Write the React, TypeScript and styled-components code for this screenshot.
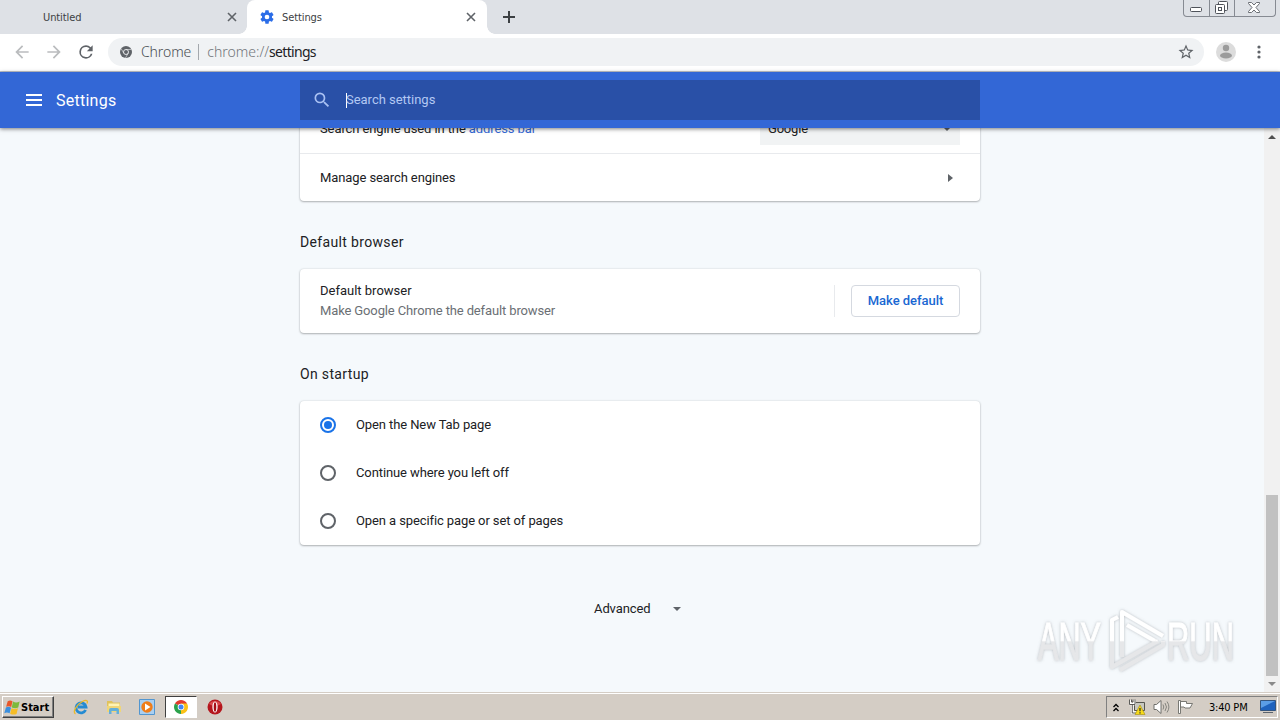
import type { ReactNode } from 'react';
import styled, { createGlobalStyle } from 'styled-components';

const GlobalStyle = createGlobalStyle`
  * {
    box-sizing: border-box;
  }

  body {
    margin: 0;
    overflow: hidden;
    font-family: Roboto, 'Liberation Sans', sans-serif;
  }

  svg {
    display: block;
    flex-shrink: 0;
  }
`;

const Screen = styled.div`
  position: relative;
  display: flex;
  flex-direction: column;
  width: 1280px;
  height: 720px;
  overflow: hidden;
  background: #f5f9fc;
`;

/* Tab strip */

const TabStrip = styled.div`
  display: flex;
  height: 34px;
  background: #dee1e6;
`;

const Tab = styled.div<{ $active?: boolean }>`
  position: relative;
  display: flex;
  align-items: center;
  width: ${(p) => (p.$active ? 240 : 247)}px;
  height: 34px;
  padding: 0 ${(p) => (p.$active ? '11px 0 12px' : '10px 0 43px')};
  border-radius: 8px 8px 0 0;
  background: ${(p) => (p.$active ? '#ffffff' : 'transparent')};

  ${(p) =>
    p.$active &&
    `
    &::before,
    &::after {
      content: '';
      position: absolute;
      bottom: 0;
      width: 8px;
      height: 8px;
    }

    &::before {
      left: -8px;
      background: radial-gradient(circle at 0 0, transparent 7.5px, #ffffff 8px);
    }

    &::after {
      right: -8px;
      background: radial-gradient(circle at 100% 0, transparent 7.5px, #ffffff 8px);
    }
  `}
`;

const TabTitle = styled.span`
  flex: 1;
  padding-top: 1px;
  font-family: 'DejaVu Sans Condensed', 'DejaVu Sans', sans-serif;
  font-stretch: condensed;
  font-size: 11px;
  line-height: 14px;
  letter-spacing: -0.1px;
  color: #3c4043;
`;

const TabIcon = styled.span`
  width: 16px;
  margin-right: 7px;
`;

const NewTab = styled.div`
  display: flex;
  align-items: center;
  padding-left: 16px;
`;

const WindowButtons = styled.div`
  display: flex;
  width: 93px;
  height: 17px;
  margin: 0 4px 0 auto;
  border: 1px solid #868a92;
  border-top: 0;
  border-radius: 0 0 4px 4px;
`;

const WindowButton = styled.div<{ $width: number }>`
  display: flex;
  align-items: center;
  justify-content: center;
  width: ${(p) => p.$width}px;
  padding: 0 2px 1px 0;

  & + & {
    border-left: 1px solid #868a92;
  }
`;

/* Toolbar */

const Toolbar = styled.div`
  display: flex;
  align-items: center;
  height: 38px;
  padding: 0 19px 1px 12px;
  border-bottom: 1px solid #c5c8ce;
  background: #ffffff;
`;

const NavIcons = styled.div`
  display: flex;
  gap: 12px;
  margin-right: 12px;
`;

const Omnibox = styled.div`
  display: flex;
  align-items: center;
  width: 1096px;
  height: 28px;
  padding: 0 9px 0 12px;
  border-radius: 14px;
  background: #f0f2f4;
`;

const UrlText = styled.div`
  display: flex;
  align-items: center;
  flex: 1;
  margin-left: 9px;
  font-family: 'Noto Sans', 'Open Sans', sans-serif;
  font-size: 14px;
  line-height: 20px;
`;

const UrlPart = styled.span<{ $color: string; $spacing?: number; $light?: boolean }>`
  font-weight: ${(p) => (p.$light ? 300 : 400)};
  letter-spacing: ${(p) => p.$spacing ?? 0}px;
  color: ${(p) => p.$color};
`;

const UrlDivider = styled.span`
  width: 1px;
  height: 16px;
  margin: 0 8px 0 7px;
  background: #a4a8ad;
`;

const Avatar = styled.div`
  margin: 0 auto 0 12px;
`;

/* Settings header */

const Header = styled.header`
  position: relative;
  z-index: 1;
  display: flex;
  align-items: center;
  flex-shrink: 0;
  height: 56px;
  padding-left: 26px;
  background: #3367d6;
  box-shadow: 0 1px 4px rgba(0, 0, 0, 0.5);
`;

const HeaderTitle = styled.h1`
  width: 244px;
  margin: 0 0 0 14px;
  font-size: 16px;
  font-weight: 400;
  letter-spacing: 0.25px;
  color: #ffffff;
`;

const SearchBox = styled.div`
  display: flex;
  align-items: center;
  width: 680px;
  height: 40px;
  padding-left: 12px;
  background: #2950a7;
`;

const Caret = styled.span`
  width: 1px;
  height: 15px;
  margin: 1px -1px 0 14px;
  background: #ffffff;
`;

const Placeholder = styled.span`
  padding-bottom: 1px;
  font-size: 13px;
  letter-spacing: -0.02px;
  color: #b3c8f3;
`;

/* Page body */

const Body = styled.div`
  display: flex;
  height: 564px;
  overflow: hidden;
`;

const Content = styled.main`
  width: 680px;
  margin: -23px 284px 0 300px;
`;

const Card = styled.section`
  border-radius: 4px;
  background: #ffffff;
  box-shadow:
    0 1px 2px rgba(60, 64, 67, 0.35),
    0 0 2px rgba(60, 64, 67, 0.2);
`;

const Row = styled.div<{ $height?: number; $divided?: boolean }>`
  display: flex;
  align-items: center;
  height: ${(p) => p.$height ?? 48}px;
  padding: 0 20px;
  border-top: ${(p) => (p.$divided ? '1px solid #e8eaed' : '0')};
`;

const Label = styled.span<{ $spacing?: number; $muted?: boolean }>`
  display: block;
  font-size: 13px;
  line-height: 20px;
  letter-spacing: ${(p) => p.$spacing ?? -0.1}px;
  white-space: nowrap;
  color: ${(p) => (p.$muted ? '#6b6f74' : '#202124')};
`;

const Link = styled.a`
  color: #3367d6;
`;

const Select = styled.div`
  display: flex;
  align-items: center;
  justify-content: space-between;
  width: 200px;
  height: 32px;
  margin-left: auto;
  padding: 0 9px 0 8px;
  background: #f1f3f4;
`;

const Arrow = styled.span<{ $direction: 'right' | 'down' | 'up'; $color?: string }>`
  width: 0;
  height: 0;
  border: 4px solid transparent;
  ${(p) => {
    const color = p.$color ?? '#5f6368';
    if (p.$direction === 'right') return `border-left: 5px solid ${color}; border-right: 0;`;
    if (p.$direction === 'down') return `border-top: 4px solid ${color}; border-bottom: 0;`;
    return `border-bottom: 4px solid ${color}; border-top: 0;`;
  }}
`;

const RowEnd = styled.div`
  display: flex;
  align-items: center;
  margin-left: auto;
  padding-right: 7px;
`;

const SectionTitle = styled.h2`
  height: 68px;
  margin: 0;
  padding-top: 31px;
  font-size: 14px;
  font-weight: 400;
  line-height: 20px;
  letter-spacing: 0.34px;
  color: #202124;
`;

const ButtonArea = styled.div`
  margin-left: auto;
  padding-left: 16px;
  border-left: 1px solid #e8eaed;
`;

const OutlineButton = styled.button`
  display: block;
  width: 109px;
  height: 32px;
  padding: 0 0 2px;
  border: 1px solid #d5d9e0;
  border-radius: 4px;
  background: #ffffff;
  font-family: inherit;
  font-size: 13px;
  font-weight: 500;
  letter-spacing: -0.05px;
  color: #1967d2;
`;

const Radio = styled.span<{ $checked?: boolean }>`
  display: flex;
  align-items: center;
  justify-content: center;
  width: 16px;
  height: 16px;
  margin-right: 20px;
  border: 2px solid ${(p) => (p.$checked ? '#1a73e8' : '#5f6368')};
  border-radius: 50%;

  &::after {
    content: '';
    width: 8px;
    height: 8px;
    border-radius: 50%;
    background: ${(p) => (p.$checked ? '#1a73e8' : 'transparent')};
  }
`;

const Advanced = styled.div`
  display: flex;
  align-items: center;
  gap: 22px;
  margin: 54px 0 0 294px;
`;

const Scrollbar = styled.div`
  display: flex;
  flex-direction: column;
  align-items: center;
  width: 16px;
  padding: 7px 0 6px;
  background: #f1f1f1;
`;

const Thumb = styled.div`
  width: 12px;
  height: 181px;
  margin: auto 0 6px;
  background: #c1c1c1;
`;

const Watermark = styled.div`
  position: absolute;
  left: 1030px;
  top: 602px;
`;

/* Taskbar */

const Taskbar = styled.footer`
  display: flex;
  align-items: center;
  height: 28px;
  padding: 1px 2px 0;
  border-top: 1px solid #d4cdc5;
  box-shadow: inset 0 1px #ffffff;
  background: #d4cdc5;
`;

const StartButton = styled.div`
  display: flex;
  align-items: center;
  width: 52px;
  height: 22px;
  padding-left: 1px;
  border: 1px solid;
  border-color: #ffffff #404040 #404040 #ffffff;
  box-shadow: inset -1px -1px #808080;
  font-family: 'DejaVu Sans Condensed', 'DejaVu Sans', sans-serif;
  font-stretch: condensed;
  font-size: 11px;
  font-weight: 700;
  color: #000000;
`;

const QuickLaunch = styled.div`
  display: flex;
  align-items: center;
  margin-left: 10px;
`;

const TaskItem = styled.div<{ $pressed?: boolean }>`
  display: flex;
  align-items: center;
  justify-content: center;
  width: ${(p) => (p.$pressed ? 32 : 33)}px;
  height: 22px;
  margin: ${(p) => (p.$pressed ? '0 1px 0 2px' : '0')};
  border: 1px solid;
  border-color: ${(p) => (p.$pressed ? '#404040 #ffffff #ffffff #404040' : 'transparent')};
  background: ${(p) => (p.$pressed ? '#ffffff' : 'transparent')};
`;

const Tray = styled.div`
  display: flex;
  align-items: center;
  width: 172px;
  height: 22px;
  margin-left: auto;
  padding-left: 6px;
  border: 1px solid;
  border-color: #808080 #ffffff #ffffff #808080;
`;

const TrayIcon = styled.span<{ $gap: number }>`
  margin-right: ${(p) => p.$gap}px;
`;

const Clock = styled.span`
  width: 51px;
  font-family: 'DejaVu Sans Condensed', 'DejaVu Sans', sans-serif;
  font-stretch: condensed;
  font-size: 11px;
  letter-spacing: -0.2px;
  white-space: nowrap;
  color: #000000;
`;

interface IconProps {
  size?: number;
  color?: string;
  path: string;
}

const Icon = ({ size = 16, color = '#5f6368', path }: IconProps) => (
  <svg width={size} height={size} viewBox="0 0 24 24" fill={color}>
    <path d={path} />
  </svg>
);

const paths = {
  back: 'M20 11H7.83l5.59-5.59L12 4l-8 8 8 8 1.41-1.41L7.83 13H20v-2z',
  forward: 'M12 4l-1.41 1.41L16.17 11H4v2h12.17l-5.58 5.59L12 20l8-8z',
  reload:
    'M17.65 6.35A7.96 7.96 0 0 0 12 4a8 8 0 1 0 7.73 10h-2.08A6 6 0 1 1 12 6c1.66 0 3.14.69 4.22 1.78L13 11h7V4l-2.35 2.35z',
  search:
    'M15.5 14h-.79l-.28-.27A6.47 6.47 0 0 0 16 9.5 6.5 6.5 0 1 0 9.5 16c1.61 0 3.09-.59 4.23-1.57l.27.28v.79l5 4.99L20.49 19l-4.99-5zm-6 0C7.01 14 5 11.99 5 9.5S7.01 5 9.5 5 14 7.01 14 9.5 11.99 14 9.5 14z',
  gear: 'M19.43 12.98c.04-.32.07-.64.07-.98s-.03-.66-.07-.98l2.11-1.65c.19-.15.24-.42.12-.64l-2-3.46c-.12-.22-.39-.3-.61-.22l-2.49 1c-.52-.4-1.08-.73-1.69-.98l-.38-2.65A.49.49 0 0 0 14 2h-4c-.25 0-.46.18-.49.42l-.38 2.65c-.61.25-1.17.59-1.69.98l-2.49-1c-.23-.09-.49 0-.61.22l-2 3.46c-.13.22-.07.49.12.64l2.11 1.65c-.04.32-.07.65-.07.98s.03.66.07.98l-2.11 1.65c-.19.15-.24.42-.12.64l2 3.46c.12.22.39.3.61.22l2.49-1c.52.4 1.08.73 1.69.98l.38 2.65c.03.24.24.42.49.42h4c.25 0 .46-.18.49-.42l.38-2.65c.61-.25 1.17-.59 1.69-.98l2.49 1c.23.09.49 0 .61-.22l2-3.46c.12-.22.07-.49-.12-.64l-2.11-1.65zM12 15.5A3.5 3.5 0 1 1 12 8.5a3.5 3.5 0 0 1 0 7z',
  star: 'M22 9.24l-7.19-.62L12 2 9.19 8.63 2 9.24l5.46 4.73L5.82 21 12 17.27 18.18 21l-1.63-7.03L22 9.24zM12 15.4l-3.76 2.27 1-4.28-3.32-2.88 4.38-.38L12 6.1l1.71 4.04 4.38.38-3.32 2.88 1 4.28L12 15.4z',
};

const CloseIcon = () => (
  <svg width="10" height="10" viewBox="0 0 10 10" stroke="#5f6368" strokeWidth="1.6">
    <path d="M1 1l8 8M9 1l-8 8" />
  </svg>
);

const ChromeGrey = () => (
  <svg width="12" height="12" viewBox="0 0 12 12">
    <circle cx="6" cy="6" r="6" fill="#5f6368" />
    <circle cx="6" cy="6" r="2.5" fill="none" stroke="#f0f2f4" strokeWidth="0.9" />
    <path d="M6 3.5h5.4M3.83 7.25L1.15 2.7M8.17 7.25L5.5 11.9" stroke="#f0f2f4" strokeWidth="0.6" />
  </svg>
);

const ChromeColor = () => (
  <svg width="14" height="14" viewBox="0 0 14 14">
    <path d="M7 7L.94 3.5A7 7 0 0 1 13.06 3.5z" fill="#e33b2e" />
    <path d="M7 7L.94 3.5A7 7 0 0 0 7 14l3-5.2z" fill="#2ba24c" />
    <path d="M7 7v7a7 7 0 0 0 6.06-10.5H7z" fill="#fbc116" />
    <circle cx="7" cy="7" r="3.3" fill="#ffffff" />
    <circle cx="7" cy="7" r="2.5" fill="#4285f4" />
  </svg>
);

const AvatarIcon = () => (
  <svg width="20" height="20" viewBox="0 0 20 20">
    <circle cx="10" cy="10" r="10" fill="#dcdcdc" />
    <circle cx="10" cy="6" r="3.2" fill="#9b9b9b" />
    <ellipse cx="10" cy="13.5" rx="6" ry="3" fill="#9b9b9b" />
  </svg>
);

const WindowsFlag = () => (
  <svg width="17" height="17" viewBox="0 0 16 16">
    <path d="M3.5 2Q6 .5 8 2.2L6.8 7.600Q4.500 6.200 2 7.400z" fill="#e8572a" />
    <path d="M8.500 2.400q2.700 1.600 6.200 0L13.400 7.900q-3 1.500-6.100 0z" fill="#7db93c" />
    <path d="M1.800 8q2.600-1.300 4.800.2L5.300 13.500Q3 12 .3 13.300z" fill="#3b8fde" />
    <path d="M7.100 8.600q2.700 1.500 6 .1l-1.300 5.300q-3 1.400-6-.2z" fill="#f6bd26" />
  </svg>
);

const ExplorerIcon = () => (
  <svg width="16" height="16" viewBox="0 0 16 16" fill="none">
    <path d="M12.6 11A5 5 0 1 1 13 8H5" stroke="#258bd2" strokeWidth="2.8" />
    <path d="M2.5 14.8C-1 13 4 5.5 9 2.8c4-2.2 6.5-1.8 5 1.7" stroke="#e9b92c" strokeWidth="1.3" />
  </svg>
);

const FolderIcon = () => (
  <svg width="16" height="16" viewBox="0 0 16 16">
    <path d="M1 2h5l1 1.5h7V13H1z" fill="#e0c25c" />
    <path d="M2.5 4.5h11V8h-11z" fill="#fff3b4" />
    <path d="M1 7h14v6H1z" fill="#f0d678" />
    <path d="M3 15V11q0-2 2-2h6q2 0 2 2v4h-2.5v-3h-5v3z" fill="#64afd9" />
  </svg>
);

const MediaIcon = () => (
  <svg width="16" height="16" viewBox="0 0 16 16">
    <path d="M.5.5h15v15H.5z" fill="#a9cff1" stroke="#5296d0" />
    <circle cx="8" cy="8" r="5.7" fill="#ef7d1a" />
    <path d="M6 4.500l5.500 3.500L6 11.500z" fill="#ffffff" />
  </svg>
);

const OperaIcon = () => (
  <svg width="16" height="16" viewBox="0 0 16 16">
    <circle cx="8" cy="8" r="7.5" fill="#b5161d" />
    <path d="M2 5a7 6 0 0 1 12 0L8 8z" fill="#d94a4c" />
    <ellipse cx="8" cy="8" rx="2.6" ry="5.6" fill="#ffffff" />
    <ellipse cx="8" cy="8" rx="1.300" ry="4.700" fill="#a60d14" />
  </svg>
);

const NetworkIcon = () => (
  <svg width="17" height="16" viewBox="0 0 17 16">
    <path d="M5.5 3.5h10v8h-10z" fill="#c8c8c0" stroke="#55554f" />
    <path d="M1.5 1v4h4V1M3.5 5v8.5H9" fill="none" stroke="#ffffff" strokeWidth="2.4" />
    <path d="M.5.5v5H6v-5M2.500.5V3H4V.5M3.300 5.500V14H8" fill="none" stroke="#4b4b47" strokeWidth="0.9" />
    <path d="M11 6l5 9.500H6z" fill="#f8db19" stroke="#a38b10" strokeWidth="0.6" />
    <path d="M11 9v3.200M11 13.200v1.300" stroke="#333333" strokeWidth="1.3" />
  </svg>
);

const SpeakerIcon = () => (
  <svg width="17" height="16" viewBox="0 0 17 16">
    <path d="M1 5.500h2.500L8 1.500v13l-4.500-4H1z" fill="#ffffff" stroke="#6f6f6b" />
    <path d="M10 5.500q1.500 2.500 0 5M12 4q3 4 0 8M14 2.500q3.800 5.500 0 11" fill="none" stroke="#85857f" />
  </svg>
);

const FlagIcon = () => (
  <svg width="17" height="16" viewBox="0 0 17 16">
    <path d="M1.500 1.500h2v13h-2z" fill="#ffffff" stroke="#6c6c68" strokeWidth="0.9" />
    <path d="M3.500 2.500h6v2h6L13 9H8L7 8H3.500z" fill="#ffffff" stroke="#6c6c68" strokeWidth="0.9" />
  </svg>
);

const MonitorIcon = () => (
  <svg width="16" height="14" viewBox="0 0 16 14">
    <path d="M.5.5h15v10H.5z" fill="#1f62bd" stroke="#34557f" />
    <path d="M1 1h14L1 8z" fill="#5b9de6" />
    <path d="M3 12.500h10" stroke="#5c636c" />
  </svg>
);

// letters and strokes fade from white to light grey at half height
const AnyRunLogo = () => (
  <svg width="214" height="82" viewBox="0 0 214 82">
    <defs>
      <linearGradient id="fade" gradientUnits="userSpaceOnUse" x1="0" y1="0" x2="0" y2="80">
        <stop offset="0.48" stopColor="#ffffff" />
        <stop offset="0.5" stopColor="#e6e7e9" />
      </linearGradient>
      <filter id="glow" x="-10%" y="-10%" width="120%" height="120%">
        <feDropShadow dx="0" dy="0" stdDeviation="1.8" floodColor="#777c82" floodOpacity="0.5" />
      </filter>
    </defs>
    <g filter="url(#glow)">
      <g
        fontFamily="'Liberation Sans Narrow', 'Liberation Sans', sans-serif"
        fontSize="53"
        fill="url(#fade)"
        stroke="url(#fade)"
        strokeWidth="1"
      >
        <text x="8" y="58" textLength="63" lengthAdjust="spacingAndGlyphs">
          ANY
        </text>
        <text x="137" y="58" textLength="67" lengthAdjust="spacingAndGlyphs">
          RUN
        </text>
      </g>
      <g fill="none" stroke="url(#fade)" strokeWidth="4" strokeLinejoin="round">
        <path d="M88 15l-6 3v47l46-26" />
        <path d="M92 55V10l41 24M97 23l28 16" />
        <path d="M90 68l43-25v-4" />
      </g>
    </g>
  </svg>
);

const startupOptions = [
  { text: 'Open the New Tab page', checked: true },
  { text: 'Continue where you left off' },
  { text: 'Open a specific page or set of pages' },
];

const taskItems: { id: string; icon: ReactNode; pressed?: boolean }[] = [
  { id: 'explorer', icon: <ExplorerIcon /> },
  { id: 'files', icon: <FolderIcon /> },
  { id: 'media', icon: <MediaIcon /> },
  { id: 'chrome', icon: <ChromeColor />, pressed: true },
  { id: 'opera', icon: <OperaIcon /> },
];

const BrowserChrome = () => (
  <>
    <TabStrip>
      <Tab>
        <TabTitle>Untitled</TabTitle>
        <CloseIcon />
      </Tab>
      <Tab $active>
        <TabIcon>
          <Icon color="#2b6de8" path={paths.gear} />
        </TabIcon>
        <TabTitle>Settings</TabTitle>
        <CloseIcon />
      </Tab>
      <NewTab>
        <svg width="12" height="12" viewBox="0 0 12 12" stroke="#3c4043" strokeWidth="2">
          <path d="M6 0v12M0 6h12" />
        </svg>
      </NewTab>
      <WindowButtons>
        <WindowButton $width={25}>
          <svg width="12" height="5" viewBox="0 0 12 5" style={{ marginTop: 4 }}>
            <rect x="0.5" y="0.5" width="11" height="4" rx="1" fill="#ffffff" stroke="#4f535a" />
          </svg>
        </WindowButton>
        <WindowButton $width={25}>
          <svg width="13" height="13" viewBox="0 0 13 13" fill="#ffffff" stroke="#4f535a">
            <rect x="3.5" y="0.5" width="9" height="9" rx="1" />
            <rect x="0.5" y="3.5" width="9" height="9" rx="1" />
            <rect x="3.5" y="6.5" width="3" height="3" />
          </svg>
        </WindowButton>
        <WindowButton $width={41}>
          <svg width="12" height="11" viewBox="0 0 12 11">
            <path
              d="M.5.5h3L6 3 8.500.5h3v1L8 5.500l3.500 4v1h-3L6 8l-2.500 2.500h-3v-1L4 5.500.5 1.500z"
              fill="#ffffff"
              stroke="#5c6067"
              strokeWidth="0.9"
            />
          </svg>
        </WindowButton>
      </WindowButtons>
    </TabStrip>
    <Toolbar>
      <NavIcons>
        <Icon size={20} color="#babcbe" path={paths.back} />
        <Icon size={20} color="#babcbe" path={paths.forward} />
        <Icon size={20} path={paths.reload} />
      </NavIcons>
      <Omnibox>
        <ChromeGrey />
        <UrlText>
          <UrlPart $light $color="#4a4e53" $spacing={-0.1}>
            Chrome
          </UrlPart>
          <UrlDivider />
          <UrlPart $light $color="#70757a">
            chrome://
          </UrlPart>
          <UrlPart $color="#202124" $spacing={-0.7}>
            settings
          </UrlPart>
        </UrlText>
        <Icon size={18} path={paths.star} />
      </Omnibox>
      <Avatar>
        <AvatarIcon />
      </Avatar>
      <svg width="4" height="14" viewBox="0 0 4 14" fill="#5f6368">
        <circle cx="2" cy="2" r="1.6" />
        <circle cx="2" cy="7" r="1.6" />
        <circle cx="2" cy="12" r="1.6" />
      </svg>
    </Toolbar>
  </>
);

const SettingsPage = () => (
  <>
    <Header>
      <svg width="16" height="12" viewBox="0 0 16 12" fill="#ffffff">
        <path d="M0 0h16v2H0zM0 5h16v2H0zM0 10h16v2H0z" />
      </svg>
      <HeaderTitle>Settings</HeaderTitle>
      <SearchBox>
        <Icon size={20} color="#a9c1f3" path={paths.search} />
        <Caret />
        <Placeholder>Search settings</Placeholder>
      </SearchBox>
    </Header>
    <Body>
      <Content>
        <Card>
          <Row>
            <Label>
              Search engine used in the <Link>address bar</Link>
            </Label>
            <Select>
              <Label $spacing={-0.2}>Google</Label>
              <Arrow $direction="down" />
            </Select>
          </Row>
          <Row $divided>
            <Label>Manage search engines</Label>
            <RowEnd>
              <Arrow $direction="right" />
            </RowEnd>
          </Row>
        </Card>
        <SectionTitle>Default browser</SectionTitle>
        <Card>
          <Row $height={64}>
            <div>
              <Label $spacing={0}>Default browser</Label>
              <Label $muted $spacing={-0.13}>
                Make Google Chrome the default browser
              </Label>
            </div>
            <ButtonArea>
              <OutlineButton>Make default</OutlineButton>
            </ButtonArea>
          </Row>
        </Card>
        <SectionTitle>On startup</SectionTitle>
        <Card>
          {startupOptions.map((option) => (
            <Row key={option.text}>
              <Radio $checked={option.checked} />
              <Label>{option.text}</Label>
            </Row>
          ))}
        </Card>
        <Advanced>
          <Label>Advanced</Label>
          <Arrow $direction="down" />
        </Advanced>
      </Content>
      <Scrollbar>
        <Arrow $direction="up" $color="#505050" />
        <Thumb />
        <Arrow $direction="down" $color="#8a8a8a" />
      </Scrollbar>
    </Body>
  </>
);

export default function App() {
  return (
    <>
      <GlobalStyle />
      <Screen>
        <BrowserChrome />
        <SettingsPage />
        <Taskbar>
          <StartButton>
            <WindowsFlag />
            Start
          </StartButton>
          <QuickLaunch>
            {taskItems.map((item) => (
              <TaskItem key={item.id} $pressed={item.pressed}>
                {item.icon}
              </TaskItem>
            ))}
          </QuickLaunch>
          <Tray>
            <TrayIcon $gap={10}>
              <svg width="6" height="9" viewBox="0 0 6 9" fill="none" stroke="#000000" strokeWidth="1.3">
                <path d="M.5 4L3 1.500 5.500 4M.5 8L3 5.500 5.500 8" />
              </svg>
            </TrayIcon>
            <TrayIcon $gap={7}>
              <NetworkIcon />
            </TrayIcon>
            <TrayIcon $gap={7}>
              <SpeakerIcon />
            </TrayIcon>
            <TrayIcon $gap={15}>
              <FlagIcon />
            </TrayIcon>
            <Clock>3:40 PM</Clock>
            <MonitorIcon />
          </Tray>
        </Taskbar>
        <Watermark>
          <AnyRunLogo />
        </Watermark>
      </Screen>
    </>
  );
}
